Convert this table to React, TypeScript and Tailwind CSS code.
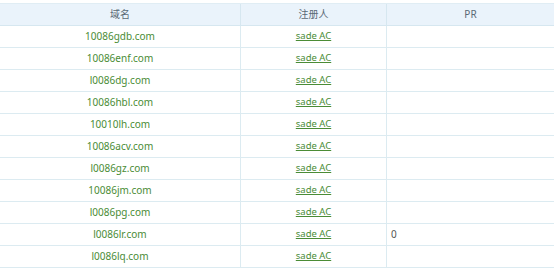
import React from 'react';

const domains = [
  '10086gdb.com',
  '10086enf.com',
  'l0086dg.com',
  '10086hbl.com',
  '10010lh.com',
  '10086acv.com',
  'l0086gz.com',
  '10086jm.com',
  'l0086pg.com',
  'l0086lr.com',
  'l0086lq.com',
];

export default function App() {
  return (
    <div className="w-[554px] h-[275px] bg-white pt-[3px] overflow-hidden" style={{ fontFamily: '"Noto Sans", "Noto Sans CJK SC", sans-serif' }}>
      <div className="grid grid-cols-[241px_146px_1fr] border-t border-[#e0edf4] text-[10px]">
        <div className="h-[22px] flex items-center justify-center bg-[#eaf3fb] text-[#5a6a76] border-b border-r border-[#d6e7f0]">域名</div>
        <div className="h-[22px] flex items-center justify-center bg-[#eaf3fb] text-[#5a6a76] border-b border-r border-[#d6e7f0]">注册人</div>
        <div className="h-[22px] flex items-center justify-center bg-[#eaf3fb] text-[#5a6a76] border-b border-[#d6e7f0]">PR</div>
        {domains.map((d, i) => (
          <React.Fragment key={d}>
            <div className="h-[22px] flex items-center justify-center text-[#4a8c36] border-b border-r border-[#dcebf1]">{d}</div>
            <div className="h-[22px] flex items-center justify-center border-b border-r border-[#dcebf1]">
              <span className="text-[#4a8c36] underline text-[9.5px]">sade AC</span>
            </div>
            <div className="h-[22px] flex items-center pl-[4px] text-[#555] border-b border-[#dcebf1]">{i === 9 ? '0' : ''}</div>
          </React.Fragment>
        ))}
      </div>
    </div>
  );
}
